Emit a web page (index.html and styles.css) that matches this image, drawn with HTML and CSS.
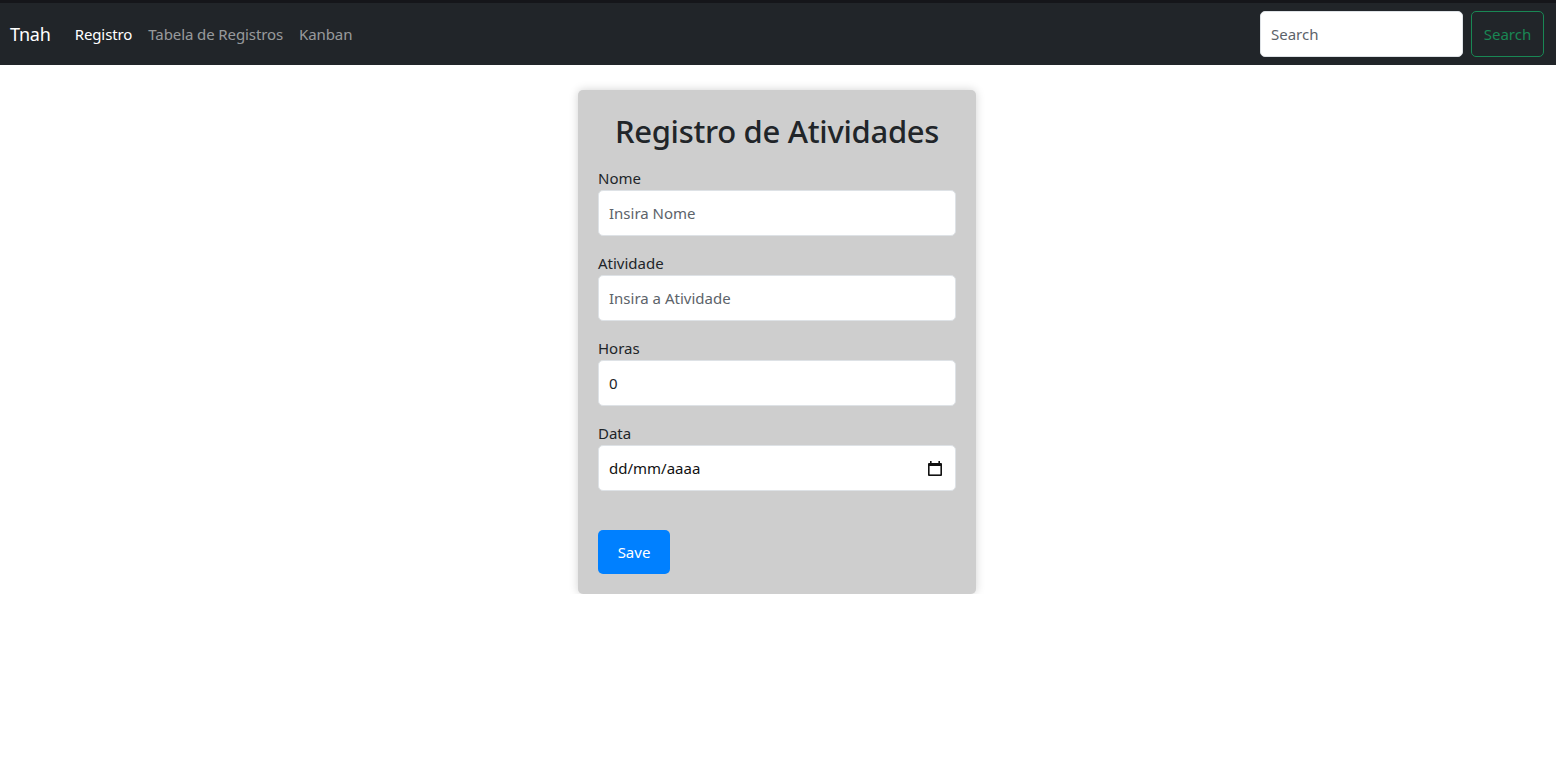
FILE: index.html
```html
<!DOCTYPE html>
<html lang="pt-BR">
<head>
<meta charset="utf-8">
<title>Registro de Atividades</title>
<link rel="stylesheet" href="styles.css">
</head>
<body>
<nav class="navbar">
  <a class="brand" href="#">Tnah</a>
  <ul class="nav-links">
    <li><a class="nav-link active" href="#">Registro</a></li>
    <li><a class="nav-link" href="#">Tabela de Registros</a></li>
    <li><a class="nav-link" href="#">Kanban</a></li>
  </ul>
  <form class="search-form">
    <input class="search-input" type="search" placeholder="Search">
    <button class="search-btn" type="button">Search</button>
  </form>
</nav>
<main class="page">
  <section class="card">
    <h1 class="card-title">Registro de Atividades</h1>
    <div class="field">
      <label class="field-label">Nome</label>
      <input class="field-input" type="text" placeholder="Insira Nome">
    </div>
    <div class="field">
      <label class="field-label">Atividade</label>
      <input class="field-input" type="text" placeholder="Insira a Atividade">
    </div>
    <div class="field">
      <label class="field-label">Horas</label>
      <input class="field-input" type="text" value="0">
    </div>
    <div class="field">
      <label class="field-label">Data</label>
      <div class="field-input date-input">
        <span>dd/mm/aaaa</span>
        <svg class="cal-icon" width="14" height="15" viewBox="0 0 14 15">
          <rect x="2" y="0" width="1.6" height="3" fill="#111"/>
          <rect x="10.4" y="0" width="1.6" height="3" fill="#111"/>
          <rect x="0" y="2" width="14" height="13" rx="1" fill="#111"/>
          <rect x="1.6" y="5" width="10.8" height="8.4" fill="#fff"/>
        </svg>
      </div>
    </div>
    <button class="save-btn" type="button">Save</button>
  </section>
</main>
</body>
</html>
```

FILE: styles.css
```css
* { box-sizing: border-box; }

body {
  margin: 0;
  font-family: "Noto Sans", "Open Sans", sans-serif;
  font-size: 16px;
  color: #212529;
  background: #fff;
}

.navbar {
  display: flex;
  align-items: center;
  height: 65px;
  border-top: 3px solid #15161a;
  background: #212529;
  padding: 0 12px 0 10px;
}

.brand {
  color: #fff;
  text-decoration: none;
  font-size: 18px;
  margin-right: 24px;
  letter-spacing: -0.2px;
}

.nav-links {
  display: flex;
  gap: 16px;
  list-style: none;
  margin: 0;
  padding: 0;
}

.nav-link {
  color: rgba(255, 255, 255, 0.55);
  text-decoration: none;
  font-size: 15px;
  letter-spacing: -0.1px;
}

.nav-link.active { color: #fff; }

.search-form {
  margin-left: auto;
  display: flex;
  gap: 8px;
}

.search-input {
  width: 203px;
  height: 46px;
  border: 1px solid #dee2e6;
  border-radius: 5px;
  padding: 0 10px;
  font-family: inherit;
  font-size: 15px;
  background: #fff;
  outline: none;
}

.search-input::placeholder { color: #5c636a; }

.search-btn {
  width: 73px;
  height: 46px;
  border: 1px solid #198754;
  border-radius: 5px;
  background: transparent;
  color: #198754;
  font-family: inherit;
  font-size: 15px;
  padding: 0;
}

.page {
  display: flex;
  justify-content: center;
  padding-top: 25px;
  padding-right: 2px;
}

.card {
  width: 398px;
  background: #cecece;
  border-radius: 5px;
  box-shadow: 0 0 10px rgba(0, 0, 0, 0.18);
  padding: 20px 20px 20px;
  display: flex;
  flex-direction: column;
}

.card-title {
  margin: 2px 0 16px;
  font-size: 31px;
  font-weight: 500;
  line-height: 38px;
  text-align: center;
  letter-spacing: -0.3px;
}

.field {
  display: flex;
  flex-direction: column;
  margin-bottom: 15px;
}

.field-label {
  font-size: 15px;
  line-height: 24px;
}

.field-input {
  width: 100%;
  height: 46px;
  border: 1px solid #dee2e6;
  border-radius: 5px;
  background: #fff;
  padding: 0 10px;
  font-family: inherit;
  font-size: 15px;
  color: #212529;
  outline: none;
}

.field-input::placeholder { color: #5c636a; }

.date-input {
  display: flex;
  align-items: center;
  justify-content: space-between;
  padding-right: 13px;
  color: #111;
}

.save-btn {
  align-self: flex-start;
  margin-top: 24px;
  width: 72px;
  height: 44px;
  border: none;
  border-radius: 5px;
  background: #0080ff;
  color: #fff;
  font-family: inherit;
  font-size: 15px;
}
```
